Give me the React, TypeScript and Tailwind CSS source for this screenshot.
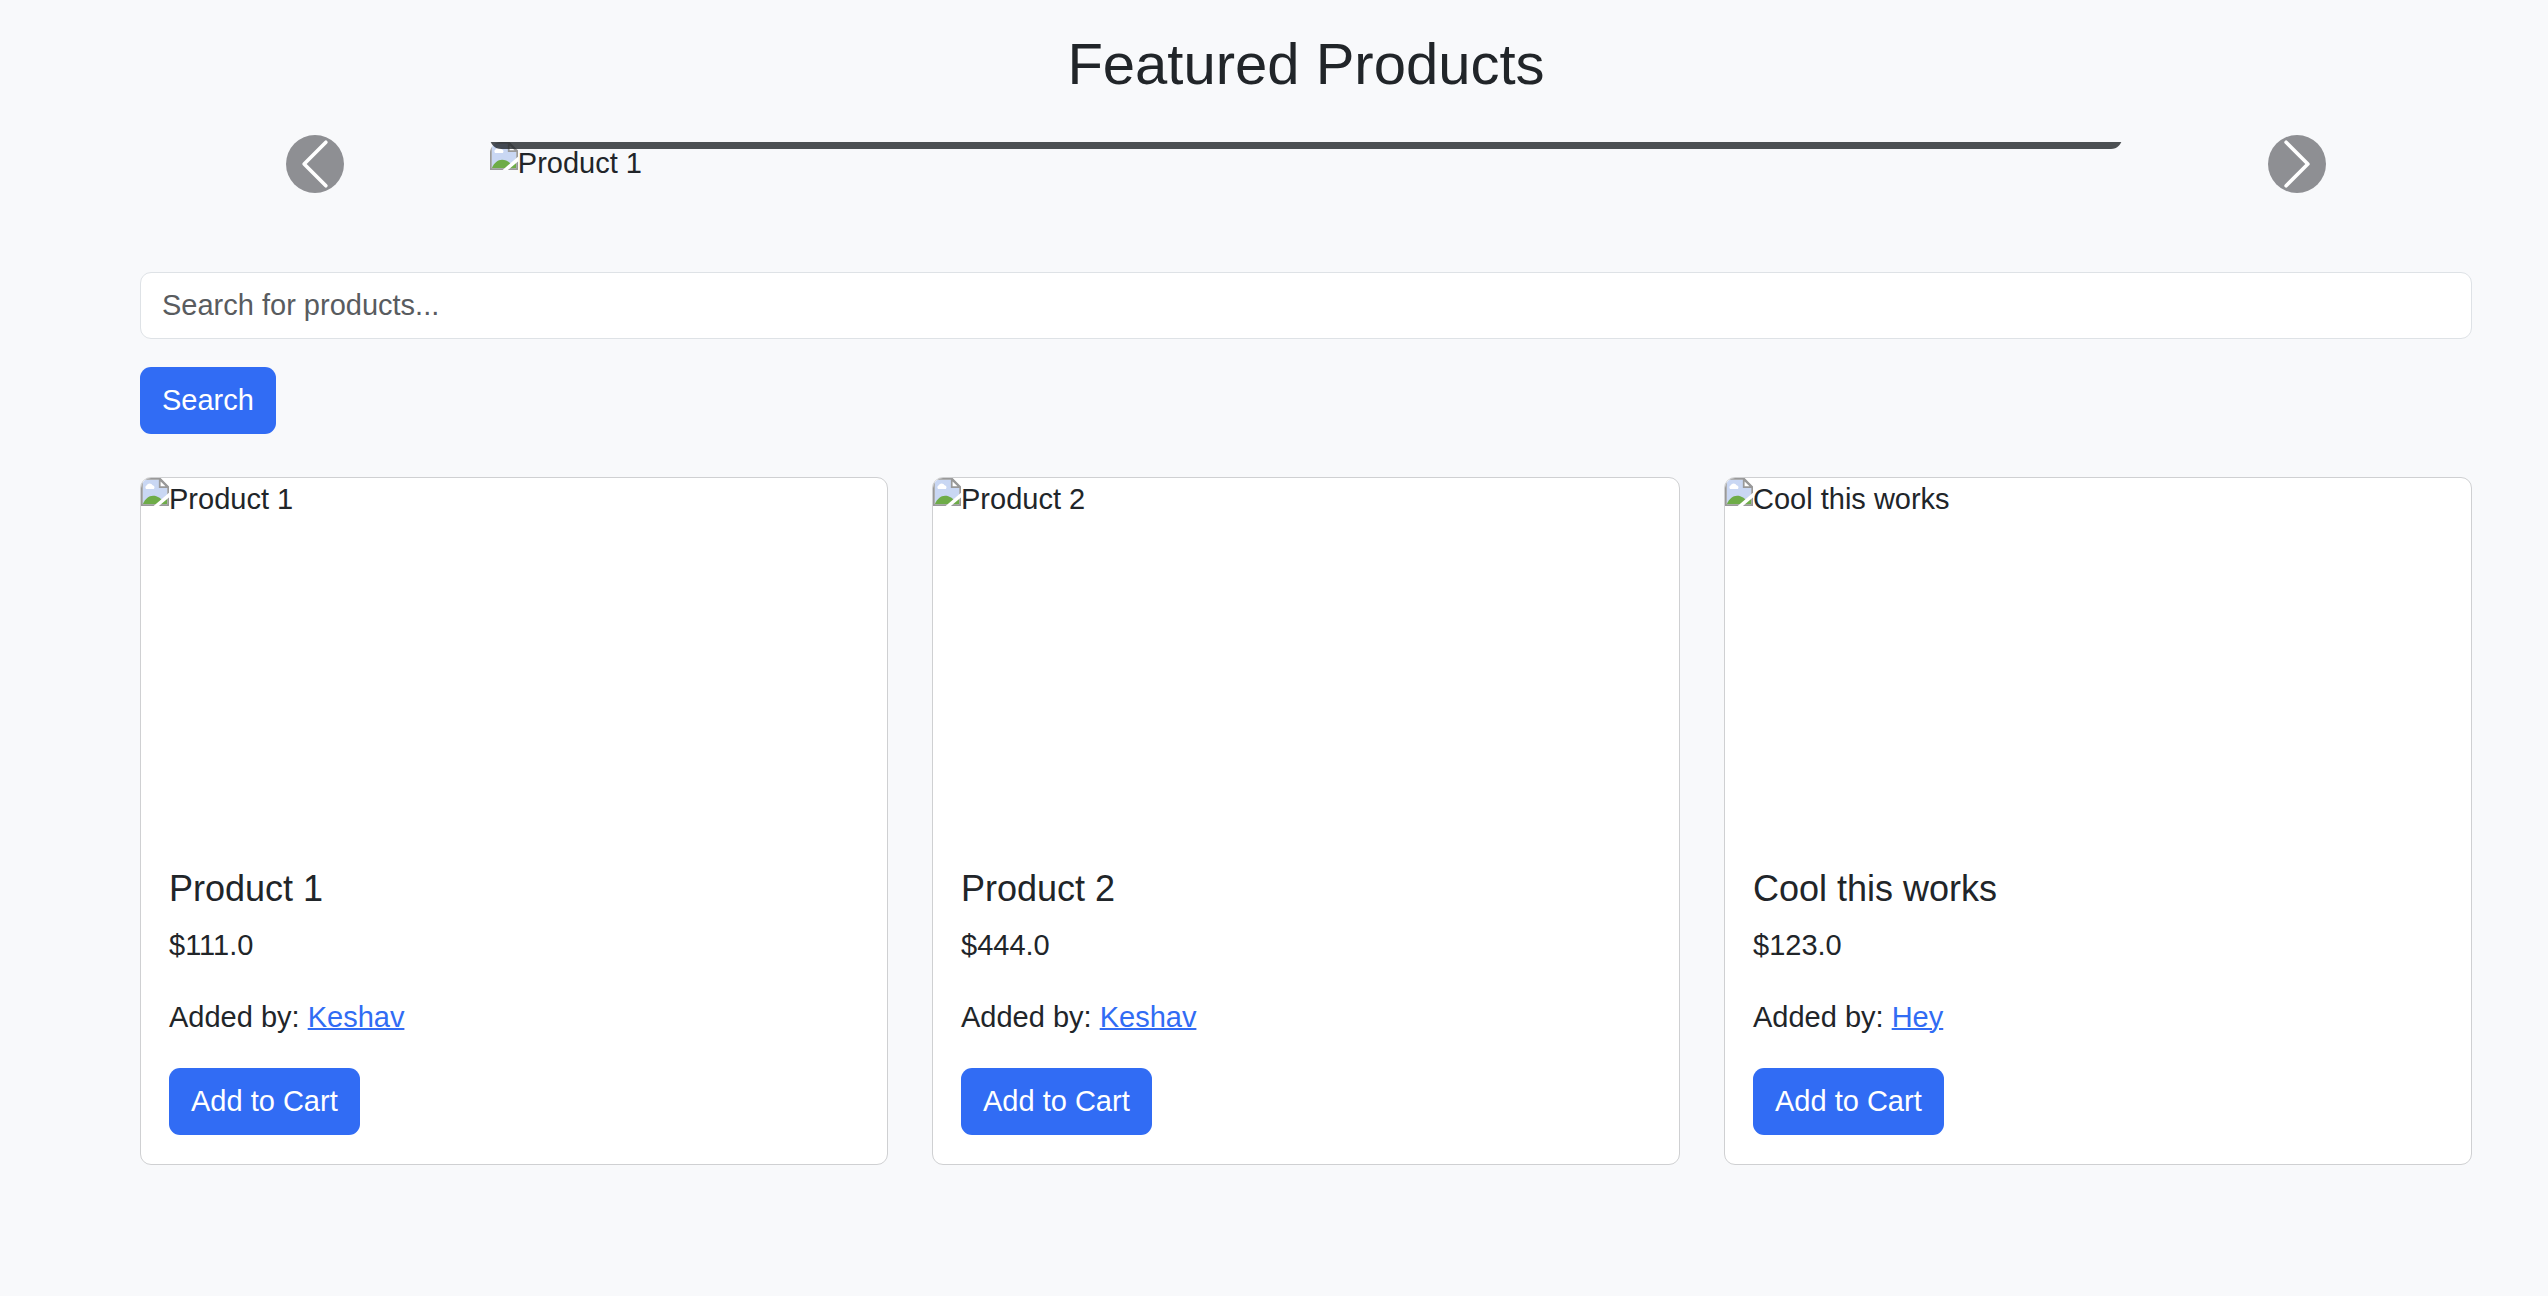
import React from "react";

type Product = {
  id: number;
  name: string;
  price: string;
  seller: string;
};

const products: Product[] = [
  { id: 1, name: "Product 1", price: "$111.0", seller: "Keshav" },
  { id: 2, name: "Product 2", price: "$444.0", seller: "Keshav" },
  { id: 3, name: "Cool this works", price: "$123.0", seller: "Hey" },
];

function MissingPictureIcon() {
  return (
    <svg viewBox="0 0 16 16" className="size-7 shrink-0" aria-hidden="true">
      <path d="M0.5 0.5H11L15.5 5V15.5H0.5Z" fill="#fff" />
      <path d="M1 1H10.6V5.4H15V15H1Z" fill="#c9d7f3" />
      <path d="M3 6.3a1.2 1.2 0 0 1 .3-2.1a1.8 1.8 0 0 1 3.3 0a1.2 1.2 0 0 1 .7 2.1Z" fill="#fff" />
      <path d="M1 15C2.4 11.8 4.4 10.1 6.9 10.1S11.8 11.6 14 15Z" fill="#6eac48" />
      <path d="M10.6 15L15 11.4V15Z" fill="#6eac48" />
      <path d="M0.5 15.5V0.5H11L15.5 5V15.5Z" fill="none" stroke="#999" />
      <path d="M10.7 0.8V5.2H15.2Z" fill="#fff" stroke="#999" />
      <path d="M16 8.4L7.2 16H10.2L16 11.2Z" fill="#fff" />
    </svg>
  );
}

function MissingPicture({ label }: { label: string }) {
  return (
    <div role="img" aria-label={label} className="flex items-start leading-[43px]">
      <MissingPictureIcon />
      <span>{label}</span>
    </div>
  );
}

function CarouselControl({ label, path }: { label: string; path: string }) {
  return (
    <button
      type="button"
      aria-label={label}
      className="-my-2 flex w-[15%] cursor-pointer items-center justify-center"
    >
      <span className="size-[58px] rounded-full bg-[#8e8f93]">
        <svg viewBox="0 0 16 16" className="size-full" fill="#fff" aria-hidden="true">
          <path d={path} />
        </svg>
      </span>
    </button>
  );
}

function Carousel() {
  return (
    <section aria-label="Featured" className="mt-11 flex">
      <CarouselControl
        label="Previous"
        path="M11.354 1.646a.5.5 0 0 1 0 .708L5.707 8l5.647 5.646a.5.5 0 0 1-.708.708l-6-6a.5.5 0 0 1 0-.708l6-6a.5.5 0 0 1 .708 0z"
      />
      <div className="relative flex-1">
        <div className="overflow-hidden rounded-[11px]">
          <MissingPicture label="Product 1" />
        </div>
        <div className="absolute inset-x-0 top-0 h-[7px] overflow-hidden">
          <div className="-mt-5 h-[27px] rounded-b-[11px] bg-[#212529]/80" />
        </div>
      </div>
      <CarouselControl
        label="Next"
        path="M4.646 1.646a.5.5 0 0 1 .708 0l6 6a.5.5 0 0 1 0 .708l-6 6a.5.5 0 0 1-.708-.708L10.293 8 4.646 2.354a.5.5 0 0 1 0-.708z"
      />
    </section>
  );
}

function ProductCard({ product }: { product: Product }) {
  return (
    <article className="overflow-hidden rounded-[11px] border border-[#cfd0d2] bg-white">
      <div className="h-[360px]">
        <MissingPicture label={product.name} />
      </div>
      <div className="px-7 py-[29px]">
        <h2 className="mb-[14px] text-[36px] leading-[43px]">{product.name}</h2>
        <p className="mb-[29px]">{product.price}</p>
        <p className="mb-[29px]">
          Added by:{" "}
          <a href="#seller" className="text-[#316cf4] underline decoration-2">
            {product.seller}
          </a>
        </p>
        <button
          type="button"
          className="block cursor-pointer rounded-[11px] bg-[#316cf4] px-[22px] py-3 text-white"
        >
          Add to Cart
        </button>
      </div>
    </article>
  );
}

export default function App() {
  return (
    <main className="min-h-screen bg-[#f8f9fb] pt-[29px] pr-[76px] pb-16 pl-[140px] font-['Liberation_Sans',Arial,sans-serif] text-[29px] leading-[43px] text-[#212529]">
      <h1 className="text-center text-[58px] leading-[69px]">Featured Products</h1>
      <Carousel />
      <form className="mt-[87px]" onSubmit={(e) => e.preventDefault()}>
        <input
          type="search"
          aria-label="Search for products"
          placeholder="Search for products..."
          className="block w-full rounded-[11px] border border-[#dee2e6] bg-white px-[21px] py-[11px] leading-[43px] placeholder:text-[#595c5f]"
        />
        <button
          type="submit"
          className="mt-7 block cursor-pointer rounded-[11px] bg-[#316cf4] px-[22px] py-3 text-white"
        >
          Search
        </button>
      </form>
      <section aria-label="Products" className="mt-[43px] grid grid-cols-3 gap-11">
        {products.map((product) => (
          <ProductCard key={product.id} product={product} />
        ))}
      </section>
    </main>
  );
}
